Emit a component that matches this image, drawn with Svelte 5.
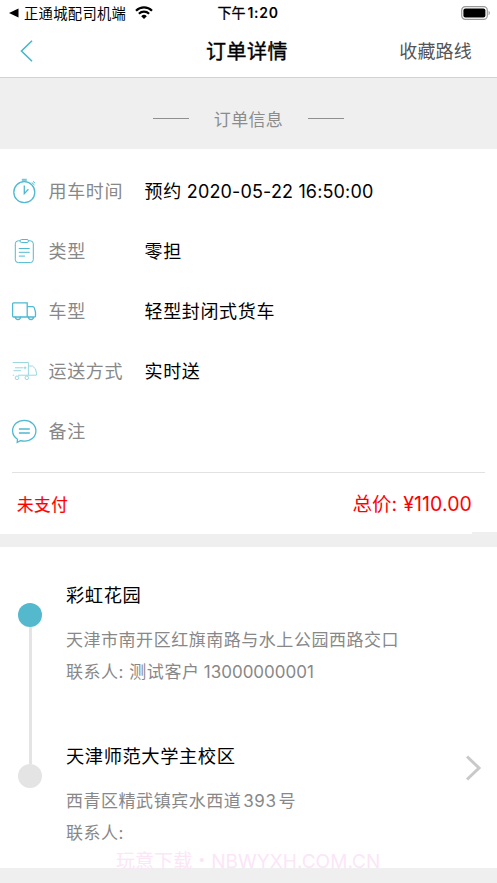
<script>
  const rows = [
    { icon: 'clock', label: '用车时间', cjk: '预约', latin: '2020-05-22 16:50:00' },
    { icon: 'list', label: '类型', cjk: '零担' },
    { icon: 'truck', label: '车型', cjk: '轻型封闭式货车' },
    { icon: 'delivery', label: '运送方式', cjk: '实时送' },
    { icon: 'note', label: '备注', cjk: '' }
  ];
</script>

<div class="screen">
  <div class="status">
    <div class="back-app">
      <svg width="10" height="10" viewBox="0 0 10 10"><path d="M0 5L9.5 .5v9z" fill="#000" /></svg>
      <span class="app-name">正通城配司机端</span>
      <svg class="wifi" width="18" height="13" viewBox="0 0 18 13">
        <path d="M1 4.7a11.5 11.5 0 0 1 16 0M3.9 7.7a7.4 7.4 0 0 1 10.2 0" fill="none" stroke="#000" stroke-width="2.2" />
        <path d="M9 13L6.2 10.2a4 4 0 0 1 5.6 0z" fill="#000" />
      </svg>
    </div>
    <div class="time"><span class="ampm">下午</span><span class="clock">1:20</span></div>
    <svg class="battery" width="30" height="14" viewBox="0 0 30 14">
      <rect x=".7" y=".7" width="25.6" height="12.6" rx="3.6" fill="none" stroke="#999" stroke-width="1.2" />
      <rect x="2.4" y="2.4" width="22" height="9.2" rx="2" fill="#000" />
      <path d="M27.6 4.8v4.4q1.3-.7 1.3-2.2t-1.3-2.2" fill="#999" />
    </svg>
  </div>

  <header>
    <svg class="back" width="13" height="22" viewBox="0 0 13 22"><path d="M12 .8L1.5 11 12 21.2" fill="none" stroke="#49b5ca" stroke-width="1.6" /></svg>
    <h1>订单详情</h1>
    <span class="save">收藏路线</span>
  </header>

  <div class="section-title"><i></i><span>订单信息</span><i></i></div>

  <section class="info">
    {#each rows as row}
      <div class="row">
        <svg class="icon" width="26" height="26" viewBox="0 0 26 26" fill="none" stroke="#4fb9d0" stroke-width="1.3">
          {#if row.icon === 'clock'}
            <circle cx="13.3" cy="14.2" r="10.500" />
            <path d="M13.3 7.500v8.200l4.100-4.400" />
            <path d="M10.800 1.300h5M10.800 2.800h5M20.700 4.500l2.800 2.500M22 3.300l2.100 1.900" stroke-width="1" />
          {:else if row.icon === 'list'}
            <path d="M9.200 2.800H7.300a3 3 0 0 0-3 3v15.800a3 3 0 0 0 3 3h12a3 3 0 0 0 3-3V5.800a3 3 0 0 0-3-3h-1.900" stroke-width="1" />
            <rect x="9.200" y="1.500" width="8.200" height="3" rx="1.300" stroke-width="1" />
            <path d="M7.800 10.500h10.900M7.800 14.300h10.900M7.800 18.100h6.200" stroke-width="1" />
          {:else if row.icon === 'truck'}
            <path d="M4.500 19H2.600a1 1 0 0 1-1-1V5.800a1 1 0 0 1 1-1h13.600v14.200H9.500M16.200 8.600h5.400q1.300 0 1.700 1.300l1.200 4.100v4a1 1 0 0 1-1 1h-.4M16.200 19h1.300" />
            <path d="M4.500 19a2.500 2.500 0 0 0 5 0zM17.500 19a2.500 2.500 0 0 0 5 0z" />
          {:else if row.icon === 'delivery'}
            <g stroke="#8ed3e0" stroke-width=".9">
              <path d="M1.700 4.500h15.700v12.700M1.700 17.200h1.500M7 17.200h18.200M17.700 8h3.800q4 2.200 4 7.200v2" />
              <path d="M2.500 12.700h7.500M4 9.800h8" /><path d="M12.500 9.800h3M14 8.400v2.800" />
              <circle cx="6" cy="19.800" r="1.800" /><circle cx="15.800" cy="19.800" r="1.800" />
            </g>
          {:else}
            <path d="M6.500 21.300c-2.900-2-4.900-4.600-4.900-8.300C1.600 6.700 6.700 2.400 13.300 2.400s11.600 4.500 11.600 10.500-5.100 10.300-11.600 10.300c-1.400 0-2.700-.2-3.800-.5l-3.300 1.700z" />
            <path d="M7.900 11h10.900M7.900 15h10.900" />
          {/if}
        </svg>
        <span class="label">{row.label}</span>
        <span class="value">{row.cjk}</span>
        {#if row.latin}<span class="latin">{row.latin}</span>{/if}
      </div>
    {/each}
    <div class="payment">
      <span class="unpaid">未支付</span>
      <span class="total"><span class="total-label">总价:</span><span class="price">¥110.00</span></span>
    </div>
    <div class="edge"></div>
  </section>

  <section class="route">
    <div class="rail"><i class="dot start"></i><i class="line"></i><i class="dot"></i></div>
    <div class="stops">
      <div class="stop">
        <h2>彩虹花园</h2>
        <p class="addr">天津市南开区红旗南路与水上公园西路交口</p>
        <p class="contact">联系人: 测试客户 <span class="phone">13000000001</span></p>
      </div>
      <div class="stop second">
        <h2>天津师范大学主校区</h2>
        <p class="addr">西青区精武镇宾水西道<span class="no">393</span>号</p>
        <p class="contact">联系人:</p>
      </div>
    </div>
    <svg class="chevron" width="17" height="26" viewBox="0 0 17 26"><path d="M2 1.500L14 13 2 24.500" fill="none" stroke="#c9c9c9" stroke-width="3" /></svg>
  </section>

  <div class="watermark">玩意下载・NBWYXH.COM.CN</div>
</div>

<style>
  :global(body) { margin: 0; background: #efefef; }
  .screen {
    position: relative;
    width: 497px;
    height: 883px;
    overflow: hidden;
    background: #efefef;
    color: #000;
    font-family: Inter, "Noto Sans CJK SC", sans-serif;
    white-space: nowrap;
  }
  h1, h2, p { margin: 0; font-weight: 400; }
  svg { display: block; flex: none; }
  .status {
    display: grid;
    grid-template-columns: 1fr auto 1fr;
    align-items: center;
    height: 26px;
    padding: 0 6px 0 9px;
    background: #fff;
    line-height: 26px;
  }
  .back-app { display: flex; align-items: center; }
  .app-name { margin-left: 5px; padding-top: 1px; font-size: 14.300px; line-height: 25px; letter-spacing: .3px; }
  .wifi { margin-left: 9px; margin-top: -1px; }
  .time { display: flex; margin-right: 4px; font-size: 14px; font-weight: 400; }
  .ampm { width: 30px; -webkit-text-stroke: .3px #000; }
  .clock { font-weight: 600; font-size: 14px; letter-spacing: .7px; }
  .battery { justify-self: end; }
  header {
    display: grid;
    grid-template-columns: 1fr auto 1fr;
    align-items: center;
    height: 51px;
    padding: 0 25px 0 20px;
    background: #fff;
    border-bottom: 1px solid #d2d2d2;
    line-height: 50px;
  }
  .back { margin-top: -2px; }
  h1 { padding-left: 2px; font-size: 20px; letter-spacing: .5px; -webkit-text-stroke: .4px #000; }
  .save { justify-self: end; color: #555; font-size: 18px; letter-spacing: .2px; }
  .section-title {
    display: flex;
    align-items: center;
    justify-content: center;
    height: 71px;
    padding-top: 10px;
    box-sizing: border-box;
    color: #8b8b8b;
    font-size: 17px;
    letter-spacing: .35px;
  }
  .section-title i { width: 36px; height: 1px; background: #8f8f8f; }
  .section-title span { margin: 0 25px; }
  .info { height: 385px; padding-top: 12px; box-sizing: border-box; background: #fff; }
  .row { display: flex; align-items: center; height: 60px; padding-left: 11px; font-size: 18px; letter-spacing: .65px; line-height: 30px; }
  .row span { padding-top: 2px; }
  .label { width: 96px; margin-left: 11.500px; color: #888; }
  .row .latin { margin-left: 5px; padding-top: 1px; font-size: 18px; letter-spacing: .15px; }
  .payment {
    display: flex;
    align-items: center;
    justify-content: space-between;
    height: 59px;
    margin: 11px 12px 0;
    padding: 0 13px 0 5px;
    border-top: 1px solid #e2e2e2;
    color: #f00;
  }
  .unpaid { padding-top: 2px; font-size: 16.500px; letter-spacing: .6px; -webkit-text-stroke: .2px #f00; }
  .total { display: flex; align-items: baseline; font-size: 19.500px; }
  .price { margin-left: 6px; letter-spacing: .1px; }
  .edge { width: 25px; height: 2px; margin: 0 0 0 auto; background: #efefef; }
  .route { display: flex; height: 321px; margin-top: 13px; background: #fff; }
  .rail { display: flex; flex-direction: column; align-items: center; width: 24px; margin: 56px 0 0 18px; }
  .dot { width: 24px; height: 24px; border-radius: 50%; background: #e4e4e4; }
  .dot.start { background: #54b9cc; }
  .line { width: 3px; height: 137px; background: #e4e4e4; }
  .stops { flex: 1; margin-left: 24px; padding-top: 33px; }
  .stop { height: 161px; }
  h2 { height: 30px; font-size: 18.300px; letter-spacing: .55px; line-height: 30px; }
  p { height: 32px; color: #888; font-size: 17px; letter-spacing: .53px; line-height: 32px; }
  .addr { margin-top: 14px; }
  .phone { margin-left: -1px; letter-spacing: 0; }
  .no { margin: 0 2px; }
  .chevron { margin: 208px 15px 0 0; }
  .watermark {
    position: absolute;
    left: 116px;
    top: 848px;
    color: #fbe6f8;
    font-size: 19px;
    letter-spacing: .05px;
    line-height: 28px;
  }
</style>
